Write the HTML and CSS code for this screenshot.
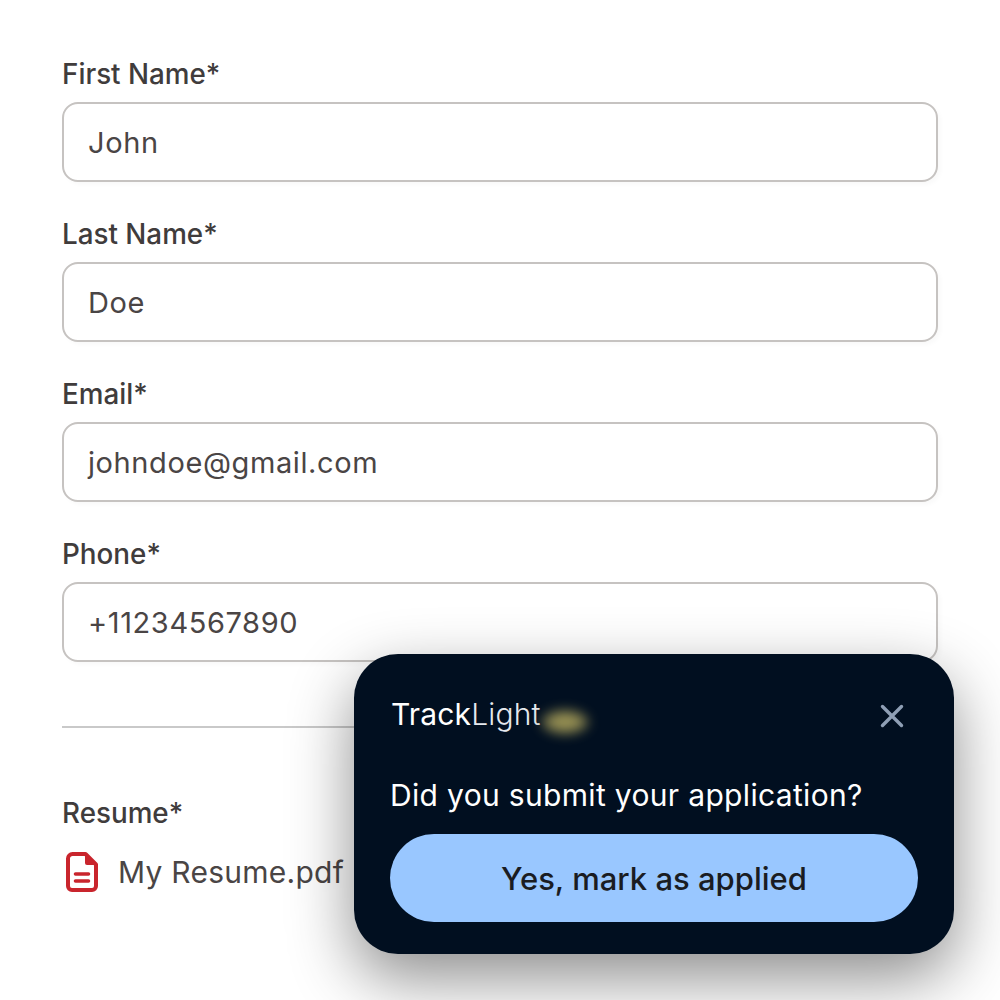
FILE: index.html
```html
<!DOCTYPE html>
<html lang="en">
<head>
<meta charset="utf-8">
<title>Application form</title>
<link rel="stylesheet" href="styles.css">
</head>
<body>
<main class="form">
  <div class="field">
    <div class="label">First Name*</div>
    <div class="input">John</div>
  </div>
  <div class="field">
    <div class="label">Last Name*</div>
    <div class="input">Doe</div>
  </div>
  <div class="field">
    <div class="label">Email*</div>
    <div class="input">johndoe@gmail.com</div>
  </div>
  <div class="field">
    <div class="label">Phone*</div>
    <div class="input">+11234567890</div>
  </div>
  <hr class="divider">
  <div class="label">Resume*</div>
  <div class="file">
    <svg class="file-icon" viewBox="0 0 32 40" width="32" height="40" aria-hidden="true">
      <path d="M6.500 2h13L30 12.500V34a4 4 0 0 1-4 4H6a4 4 0 0 1-4-4V6.500A4.500 4.500 0 0 1 6.500 2z" fill="none" stroke="#c9252d" stroke-width="4" stroke-linejoin="round"/>
      <path d="M19 1L31 13H21a2 2 0 0 1-2-2z" fill="#c9252d"/>
      <path d="M9.500 22h13M9.500 29h13" stroke="#c9252d" stroke-width="3.600" stroke-linecap="round"/>
    </svg>
    <span>My Resume.pdf</span>
  </div>
</main>
<aside class="popup">
  <div class="popup-head">
    <div class="brand"><span class="brand-bold">Track</span>Light<span class="glow"></span></div>
    <svg class="close" viewBox="0 0 24 24" width="24" height="24" aria-hidden="true">
      <path d="M2.500 2.500l19 19M21.500 2.500l-19 19" stroke="#8f9fb5" stroke-width="3.400" stroke-linecap="round"/>
    </svg>
  </div>
  <p class="question">Did you submit your application?</p>
  <button class="applied" type="button">Yes, mark as applied</button>
</aside>
</body>
</html>
```

FILE: styles.css
```css
* { box-sizing: border-box; }
html, body { margin: 0; height: 1000px; overflow: hidden; background: #fff; }
body {
  font-family: Inter, "Liberation Sans", sans-serif;
  color: #3f3a3a;
  position: relative;
}
.form {
  padding: 58px 62px 0;
  width: 1000px;
}
.field { margin-bottom: 36px; }
.field:nth-child(4) { margin-bottom: 0; }
.label {
  font-size: 27.8px;
  line-height: 32px;
  font-weight: 500;
  color: #403c3c;
  margin-bottom: 12px;
}
.input {
  height: 80px;
  width: 876px;
  border: 2px solid #c6c3c1;
  border-radius: 16px;
  box-shadow: 3px 3px 4px rgba(0,0,0,0.025);
  padding: 0 24px;
  display: flex;
  align-items: center;
  font-size: 29px;
  letter-spacing: 0.6px;
  color: #4a4545;
}
.divider {
  border: 0;
  border-top: 2px solid #c9c9c9;
  margin: 64px 0 69px;
  width: 876px;
}
.file {
  display: flex;
  align-items: center;
  gap: 20px;
  font-size: 30px;
  letter-spacing: 0.25px;
  color: #4a4545;
  margin-top: 23px;
}
.file-icon { flex: none; margin-left: 4px; }
.popup {
  position: absolute;
  left: 354px;
  top: 654px;
  width: 600px;
  height: 300px;
  background: #010f20;
  border-radius: 44px;
  box-shadow: 0 24px 64px rgba(0,0,0,0.45);
  padding: 40px 36px 32px;
  color: #fff;
}
.popup-head {
  display: flex;
  justify-content: space-between;
  align-items: center;
  height: 42px;
  padding-right: 14px;
}
.close { position: relative; top: 1px; }
.brand {
  position: relative;
  top: -1px;
  font-size: 30px;
  font-weight: 300;
  letter-spacing: 0.15px;
  padding-left: 1px;
  color: #e6e9ee;
}
.brand-bold { font-weight: 400; color: #fff; }
.glow {
  position: absolute;
  left: 150px;
  top: 13px;
  width: 50px;
  height: 26px;
  border-radius: 50%;
  background: radial-gradient(closest-side, #c2b660, #9a9255 70%, rgba(90,90,60,0.5));
  filter: blur(6px);
  opacity: 0.85;
}
.question {
  margin: 39px 0 0;
  font-size: 30px;
  line-height: 40px;
  letter-spacing: 0.33px;
  color: #fff;
  font-weight: 400;
}
.applied {
  display: block;
  width: 528px;
  height: 88px;
  margin-top: 19px;
  border: 0;
  border-radius: 44px;
  background: #99c7ff;
  color: #1a1c22;
  font-family: inherit;
  font-size: 31px;
  font-weight: 450;
}
```
